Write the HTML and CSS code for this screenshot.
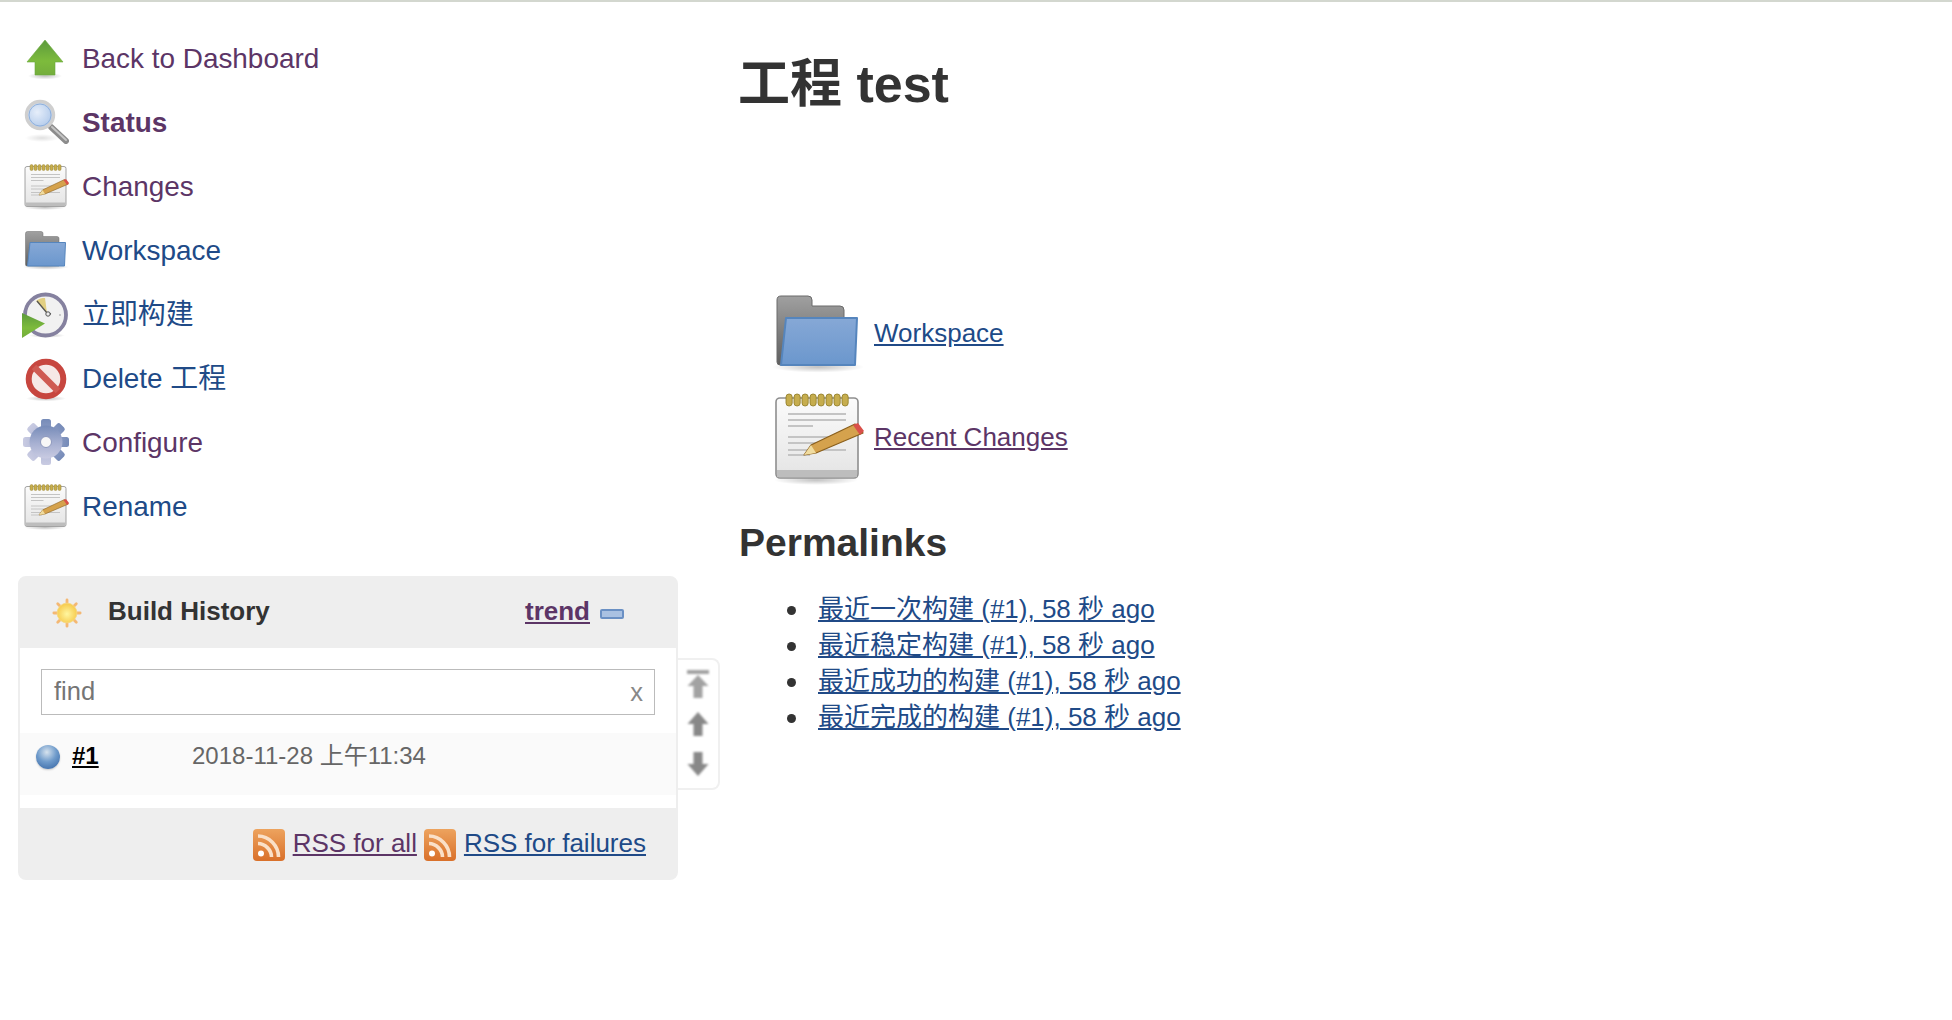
FILE: index.html
```html
<!DOCTYPE html>
<html lang="zh-CN">
<head>
<meta charset="utf-8">
<title>test</title>
<link rel="stylesheet" href="styles.css">
</head>
<body>
<svg class="defs" width="0" height="0" aria-hidden="true">
  <defs>
    <linearGradient id="gGreen" x1="0" y1="0" x2="0" y2="1"><stop offset="0" stop-color="#5c9a3c"/><stop offset=".6" stop-color="#7dbb3c"/><stop offset="1" stop-color="#74ad3c"/></linearGradient>
    <linearGradient id="gBlue" x1="0" y1="0" x2="0" y2="1"><stop offset="0" stop-color="#86a8d6"/><stop offset="1" stop-color="#6b97cd"/></linearGradient>
    <linearGradient id="gGray" x1="0" y1="0" x2="0" y2="1"><stop offset="0" stop-color="#a0a0a0"/><stop offset="1" stop-color="#5f5f5f"/></linearGradient>
    <linearGradient id="gPaper" x1="0" y1="0" x2="0" y2="1"><stop offset="0" stop-color="#fbfbfb"/><stop offset="1" stop-color="#e4e4e4"/></linearGradient>
    <linearGradient id="gGear" x1="0" y1="0" x2="0" y2="1"><stop offset="0" stop-color="#768bb8"/><stop offset=".55" stop-color="#a8b1d2"/><stop offset="1" stop-color="#c9cbe2"/></linearGradient>
    <linearGradient id="gRss" x1="0" y1="0" x2="0" y2="1"><stop offset="0" stop-color="#eda35e"/><stop offset="1" stop-color="#d9702a"/></linearGradient>
    <radialGradient id="gLens" cx=".4" cy=".4" r=".7"><stop offset="0" stop-color="#e6eefa"/><stop offset="1" stop-color="#a9c4e8"/></radialGradient>
    <radialGradient id="gSun" cx=".5" cy=".55" r=".55"><stop offset="0" stop-color="#fff6a0"/><stop offset="1" stop-color="#f6c94a"/></radialGradient>
    <radialGradient id="gShadow"><stop offset="0" stop-color="#000" stop-opacity=".24"/><stop offset="1" stop-color="#000" stop-opacity="0"/></radialGradient>

    <symbol id="i-up" viewBox="0 0 48 48">
      <ellipse cx="23" cy="42" rx="17" ry="3.5" fill="url(#gShadow)"/>
      <path d="M23 6 41 28H33V41H13V28H5Z" fill="url(#gGreen)" stroke="#6aa83c" stroke-width=".6"/>
    </symbol>

    <symbol id="i-search" viewBox="0 0 48 48">
      <ellipse cx="20" cy="40" rx="17" ry="4" fill="url(#gShadow)" opacity=".5"/>
      <path d="M29 29 44 43" stroke="#8c8c8c" stroke-width="6" stroke-linecap="round"/>
      <path d="M30 29 44 42" stroke="#c4c4c4" stroke-width="2" stroke-linecap="round"/>
      <circle cx="18" cy="17" r="13.5" fill="url(#gLens)" stroke="#cfcfcf" stroke-width="3.4"/>
      <circle cx="18" cy="17" r="11" fill="none" stroke="#8fb0dc" stroke-width="1"/>
    </symbol>

    <symbol id="i-note" viewBox="0 0 48 48">
      <ellipse cx="23" cy="45.500" rx="21" ry="2.500" fill="url(#gShadow)"/>
      <rect x="3" y="4.500" width="41" height="40" rx="2" fill="url(#gPaper)" stroke="#8e8e8e" stroke-width=".8"/>
      <rect x="3.500" y="40.500" width="40" height="3.600" fill="#bdbdbd"/>
      <g fill="#c6ad4e" stroke="#8e7a25" stroke-width=".4">
        <rect x="8" y="2.500" width="3.100" height="6" rx="1.500"/><rect x="12" y="2.500" width="3.100" height="6" rx="1.500"/><rect x="16" y="2.500" width="3.100" height="6" rx="1.500"/><rect x="20" y="2.500" width="3.100" height="6" rx="1.500"/><rect x="24" y="2.500" width="3.100" height="6" rx="1.500"/><rect x="28" y="2.500" width="3.100" height="6" rx="1.500"/><rect x="32" y="2.500" width="3.100" height="6" rx="1.500"/><rect x="36" y="2.500" width="3.100" height="6" rx="1.500"/>
      </g>
      <path d="M9 12.500H38M9 15.500H38M9 18.500H21.500M9 24H38M9 27H30M9 30.500H38M9 33H20" stroke="#c4c4c4" stroke-width="1" fill="none"/>
      <path d="M17 33 20.500 28 42.500 17.500 46.500 22 23 32Z" fill="#d5a24d" stroke="#8a5f1c" stroke-width=".6" stroke-linejoin="round"/>
      <path d="M17 33 20.500 28 23 32Z" fill="#f0dca0"/>
      <path d="M41.500 18 44 17 47 21 45 23Z" fill="#d9504a"/>
    </symbol>

    <symbol id="i-folder" viewBox="0 0 48 48">
      <ellipse cx="24" cy="41" rx="23" ry="2.800" fill="url(#gShadow)"/>
      <path d="M3.500 7.500a2 2 0 0 1 2-2H19a2 2 0 0 1 2 2V10.500H35a2 2 0 0 1 2 2V40H5A1.500 1.500 0 0 1 3.500 38.500Z" fill="url(#gGray)" stroke="#6a6a6a" stroke-width=".5"/>
      <path d="M8 16.500H43.500L42.500 40H5.500Z" fill="url(#gBlue)" stroke="#5585bd" stroke-width="1" stroke-linejoin="round"/>
    </symbol>

    <symbol id="i-clock" viewBox="0 0 48 48">
      <ellipse cx="25" cy="45.500" rx="18" ry="2.300" fill="url(#gShadow)"/>
      <circle cx="23.500" cy="25" r="20.500" fill="#f1f1f1" stroke="#85819f" stroke-width="3.800"/>
      <path d="M25 23 14 11C17 8.500 20 8 23 8Z" fill="#e2cf82"/>
      <path d="M25 23 15 11M25 23 29 24" stroke="#555" stroke-width="1.300" fill="none"/>
      <circle cx="26" cy="24" r="2.200" fill="#eee" stroke="#555" stroke-width="1"/>
      <circle cx="38" cy="25" r="1" fill="#bbb"/>
      <path d="M0 23 23 33.500 0 48Z" fill="url(#gGreen)"/>
    </symbol>

    <symbol id="i-delete" viewBox="0 0 48 48">
      <ellipse cx="24" cy="44.500" rx="20" ry="2.800" fill="url(#gShadow)"/>
      <circle cx="24" cy="25" r="17.300" fill="#f6e8e6" stroke="#c7463f" stroke-width="6"/>
      <path d="M12 13 36 37" stroke="#cf5a52" stroke-width="6.500"/>
    </symbol>

    <symbol id="i-gear" viewBox="0 0 48 48">
      <g fill="url(#gGear)">
        <rect x="19" y="1" width="10" height="46" rx="2.500"/>
        <rect x="19" y="1" width="10" height="46" rx="2.500" transform="rotate(45 24 24)"/>
        <rect x="19" y="1" width="10" height="46" rx="2.500" transform="rotate(90 24 24)"/>
        <rect x="19" y="1" width="10" height="46" rx="2.500" transform="rotate(135 24 24)"/>
        <circle cx="24" cy="24" r="16.500"/>
      </g>
      <circle cx="24" cy="24" r="5.500" fill="#f7f7f7" stroke="#8d98bd" stroke-width="1"/>
    </symbol>

    <symbol id="i-sun" viewBox="0 0 32 32">
      <g stroke="#f4b873" stroke-width="3" stroke-linecap="round">
        <path d="M16 2V30M2 16H30M6.100 6.100 25.900 25.900M25.900 6.100 6.100 25.900"/>
      </g>
      <circle cx="16" cy="16" r="10.500" fill="url(#gSun)" stroke="#f5d67c" stroke-width="1"/>
    </symbol>

    <symbol id="i-rss" viewBox="0 0 32 32">
      <rect width="32" height="32" rx="4" fill="url(#gRss)"/>
      <path d="M5 7C16 7 25.500 16.500 25.500 28" fill="none" stroke="#fae0c8" stroke-width="3.600"/>
      <path d="M5 14.500C12 14.500 18.500 21 18.500 28" fill="none" stroke="#fae0c8" stroke-width="3.600"/>
      <circle cx="8" cy="24.500" r="3" fill="#fff"/>
    </symbol>
  </defs>
</svg>

<div class="page">
  <aside class="side">
    <nav class="tasks">
      <a class="task visited" href="#"><svg class="icon"><use href="#i-up"/></svg><span class="label">Back to Dashboard</span></a>
      <a class="task visited current" href="#"><svg class="icon"><use href="#i-search"/></svg><span class="label">Status</span></a>
      <a class="task visited" href="#"><svg class="icon"><use href="#i-note"/></svg><span class="label">Changes</span></a>
      <a class="task" href="#"><svg class="icon"><use href="#i-folder"/></svg><span class="label">Workspace</span></a>
      <a class="task" href="#"><svg class="icon"><use href="#i-clock"/></svg><span class="label">立即构建</span></a>
      <a class="task" href="#"><svg class="icon"><use href="#i-delete"/></svg><span class="label">Delete 工程</span></a>
      <a class="task visited" href="#"><svg class="icon"><use href="#i-gear"/></svg><span class="label">Configure</span></a>
      <a class="task" href="#"><svg class="icon"><use href="#i-note"/></svg><span class="label">Rename</span></a>
    </nav>

    <div class="history-wrap">
      <section class="history">
        <header class="history-head">
          <svg class="icon sun"><use href="#i-sun"/></svg>
          <span class="history-title">Build History</span>
          <a class="trend" href="#">trend</a>
          <span class="collapse"></span>
        </header>
        <div class="history-body">
          <div class="find">
            <span class="find-text">find</span>
            <span class="find-clear">x</span>
          </div>
          <div class="build">
            <span class="ball"></span>
            <a class="build-num" href="#">#1</a>
            <span class="build-date">2018-11-28 上午11:34</span>
          </div>
        </div>
        <footer class="history-foot">
          <svg class="rss"><use href="#i-rss"/></svg>
          <a class="visited foot-link" href="#">RSS for all</a>
          <svg class="rss second"><use href="#i-rss"/></svg>
          <a class="foot-link" href="#">RSS for failures</a>
        </footer>
      </section>
      <div class="pager">
        <svg class="pager-ico first" viewBox="0 0 22 28"><path d="M0 0H22V4H0ZM11 5 21.500 16H15.500V28H6.500V16H.5Z"/></svg>
        <svg class="pager-ico" viewBox="0 0 22 24"><path d="M11 0 21.500 12H15.500V24H6.500V12H.5Z"/></svg>
        <svg class="pager-ico" viewBox="0 0 22 24"><path d="M11 24 21.500 12H15.500V0H6.500V12H.5Z"/></svg>
      </div>
    </div>
  </aside>

  <main class="main">
    <h1 class="title">工程 test</h1>
    <div class="big-links">
      <div class="big-row"><svg class="icon big"><use href="#i-folder"/></svg><a href="#">Workspace</a></div>
      <div class="big-row"><svg class="icon big"><use href="#i-note"/></svg><a class="visited" href="#">Recent Changes</a></div>
    </div>
    <h2 class="sub">Permalinks</h2>
    <ul class="perma">
      <li><a href="#">最近一次构建 (#1), 58 秒 ago</a></li>
      <li><a href="#">最近稳定构建 (#1), 58 秒 ago</a></li>
      <li><a href="#">最近成功的构建 (#1), 58 秒 ago</a></li>
      <li><a href="#">最近完成的构建 (#1), 58 秒 ago</a></li>
    </ul>
  </main>
</div>
</body>
</html>
```

FILE: styles.css
```css
* { box-sizing: border-box; }

html, body { margin: 0; padding: 0; background: #fff; }

body {
  height: 1020px;
  overflow: hidden;
  border-top: 2px solid #d3d7cf;
  color: #333;
  font-family: "Liberation Sans", "Noto Sans CJK SC", sans-serif;
  font-size: 26px;
}

a { color: #204a87; }
a.visited { color: #5c3566; }

.defs { display: block; }

.page { display: flex; align-items: flex-start; }

.side { width: 720px; flex: none; padding: 24px 0 0 18px; }

.icon { filter: blur(.5px); flex: none; }

.tasks { display: flex; flex-direction: column; }

.task {
  display: flex;
  align-items: center;
  gap: 12px;
  height: 64px;
  padding-left: 4px;
  font-size: 27.9px;
  text-decoration: none;
}
.task .icon { width: 48px; height: 48px; }
.task .label { margin-top: 2px; line-height: 32px; height: 32px; }
.task.current { font-weight: bold; }

.history-wrap { display: flex; align-items: flex-start; margin-top: 38px; }

.history {
  width: 660px;
  flex: none;
  border: 2px solid #eee;
  border-radius: 8px;
  background: #eee;
}

.history-head {
  display: flex;
  align-items: center;
  height: 70px;
  padding: 0 52px 4px 32px;
  line-height: 1;
}
.sun { width: 30px; height: 30px; margin-top: 4px; }
.history-title { margin-left: 26px; font-weight: bold; flex: 1; }
.trend { color: #5c3566; font-weight: bold; }
.collapse {
  width: 24px;
  height: 10px;
  margin: 5px 0 0 10px;
  border: 2px solid #6a90c4;
  border-radius: 2px;
  background: #a9c1e2;
}

.history-body { height: 160px; padding-top: 21px; background: #fff; }

.find {
  display: flex;
  align-items: center;
  justify-content: space-between;
  width: 614px;
  height: 46px;
  margin-left: 21px;
  padding: 0 11px 2px 12px;
  border: 1.5px solid #bbb;
  background: #fff;
  color: #757575;
  font-size: 25.5px;
}
.find-clear { color: #888; margin-top: 2px; }

.build {
  display: flex;
  align-items: flex-start;
  height: 62px;
  margin-top: 18px;
  padding: 7px 0 0 16px;
  background: #fafafa;
  font-size: 24px;
  line-height: 32px;
}
.ball {
  width: 24px;
  height: 24px;
  margin-top: 5px;
  border-radius: 50%;
  background: radial-gradient(circle at 45% 30%, #d7e3ee, #6f9bcb 45%, #2f5f9f);
  box-shadow: 0 1px 2px rgba(0,0,0,.2);
}
.build-num { margin-left: 12px; width: 120px; color: #000; font-weight: bold; }
.build-date { color: #666; }

.history-foot {
  display: flex;
  align-items: center;
  justify-content: flex-end;
  gap: 8px;
  height: 70px;
  padding: 4px 30px 0 0;
}
.foot-link { margin-top: -3px; }
.rss { width: 32px; height: 32px; flex: none; filter: blur(.4px); }
.rss.second { margin-left: -1px; }

.pager {
  display: flex;
  flex: none;
  flex-direction: column;
  align-items: center;
  width: 42px;
  height: 132px;
  margin-top: 82px;
  padding-top: 10px;
  border: 2px solid #f0f0f0;
  border-left: 0;
  border-radius: 0 8px 8px 0;
}
.pager-ico { width: 22px; height: 24px; margin-bottom: 16px; fill: #888; filter: blur(.8px); flex: none; }
.pager-ico.first { height: 28px; margin-bottom: 14px; fill: #a2a2a2; }

.main { flex: 1; margin-left: 19px; padding-top: 52px; }

.title { margin: 0 0 0 -1px; font-size: 52px; line-height: 60px; font-weight: bold; }

.big-links { margin: 167px 0 0 31px; }
.big-row { display: flex; align-items: center; gap: 8px; height: 104px; }
.icon.big { width: 96px; height: 96px; filter: blur(.6px); }

.sub { margin: 32px 0 0; font-size: 39px; line-height: 44px; font-weight: bold; }

.perma { margin: 26px 0 0; padding: 0 0 0 79px; line-height: 36px; list-style: none; }
.perma li::before {
  content: "";
  display: inline-block;
  width: 9px;
  height: 9px;
  margin: 0 22px 2px -31px;
  border-radius: 50%;
  background: #333;
  vertical-align: middle;
}
```
